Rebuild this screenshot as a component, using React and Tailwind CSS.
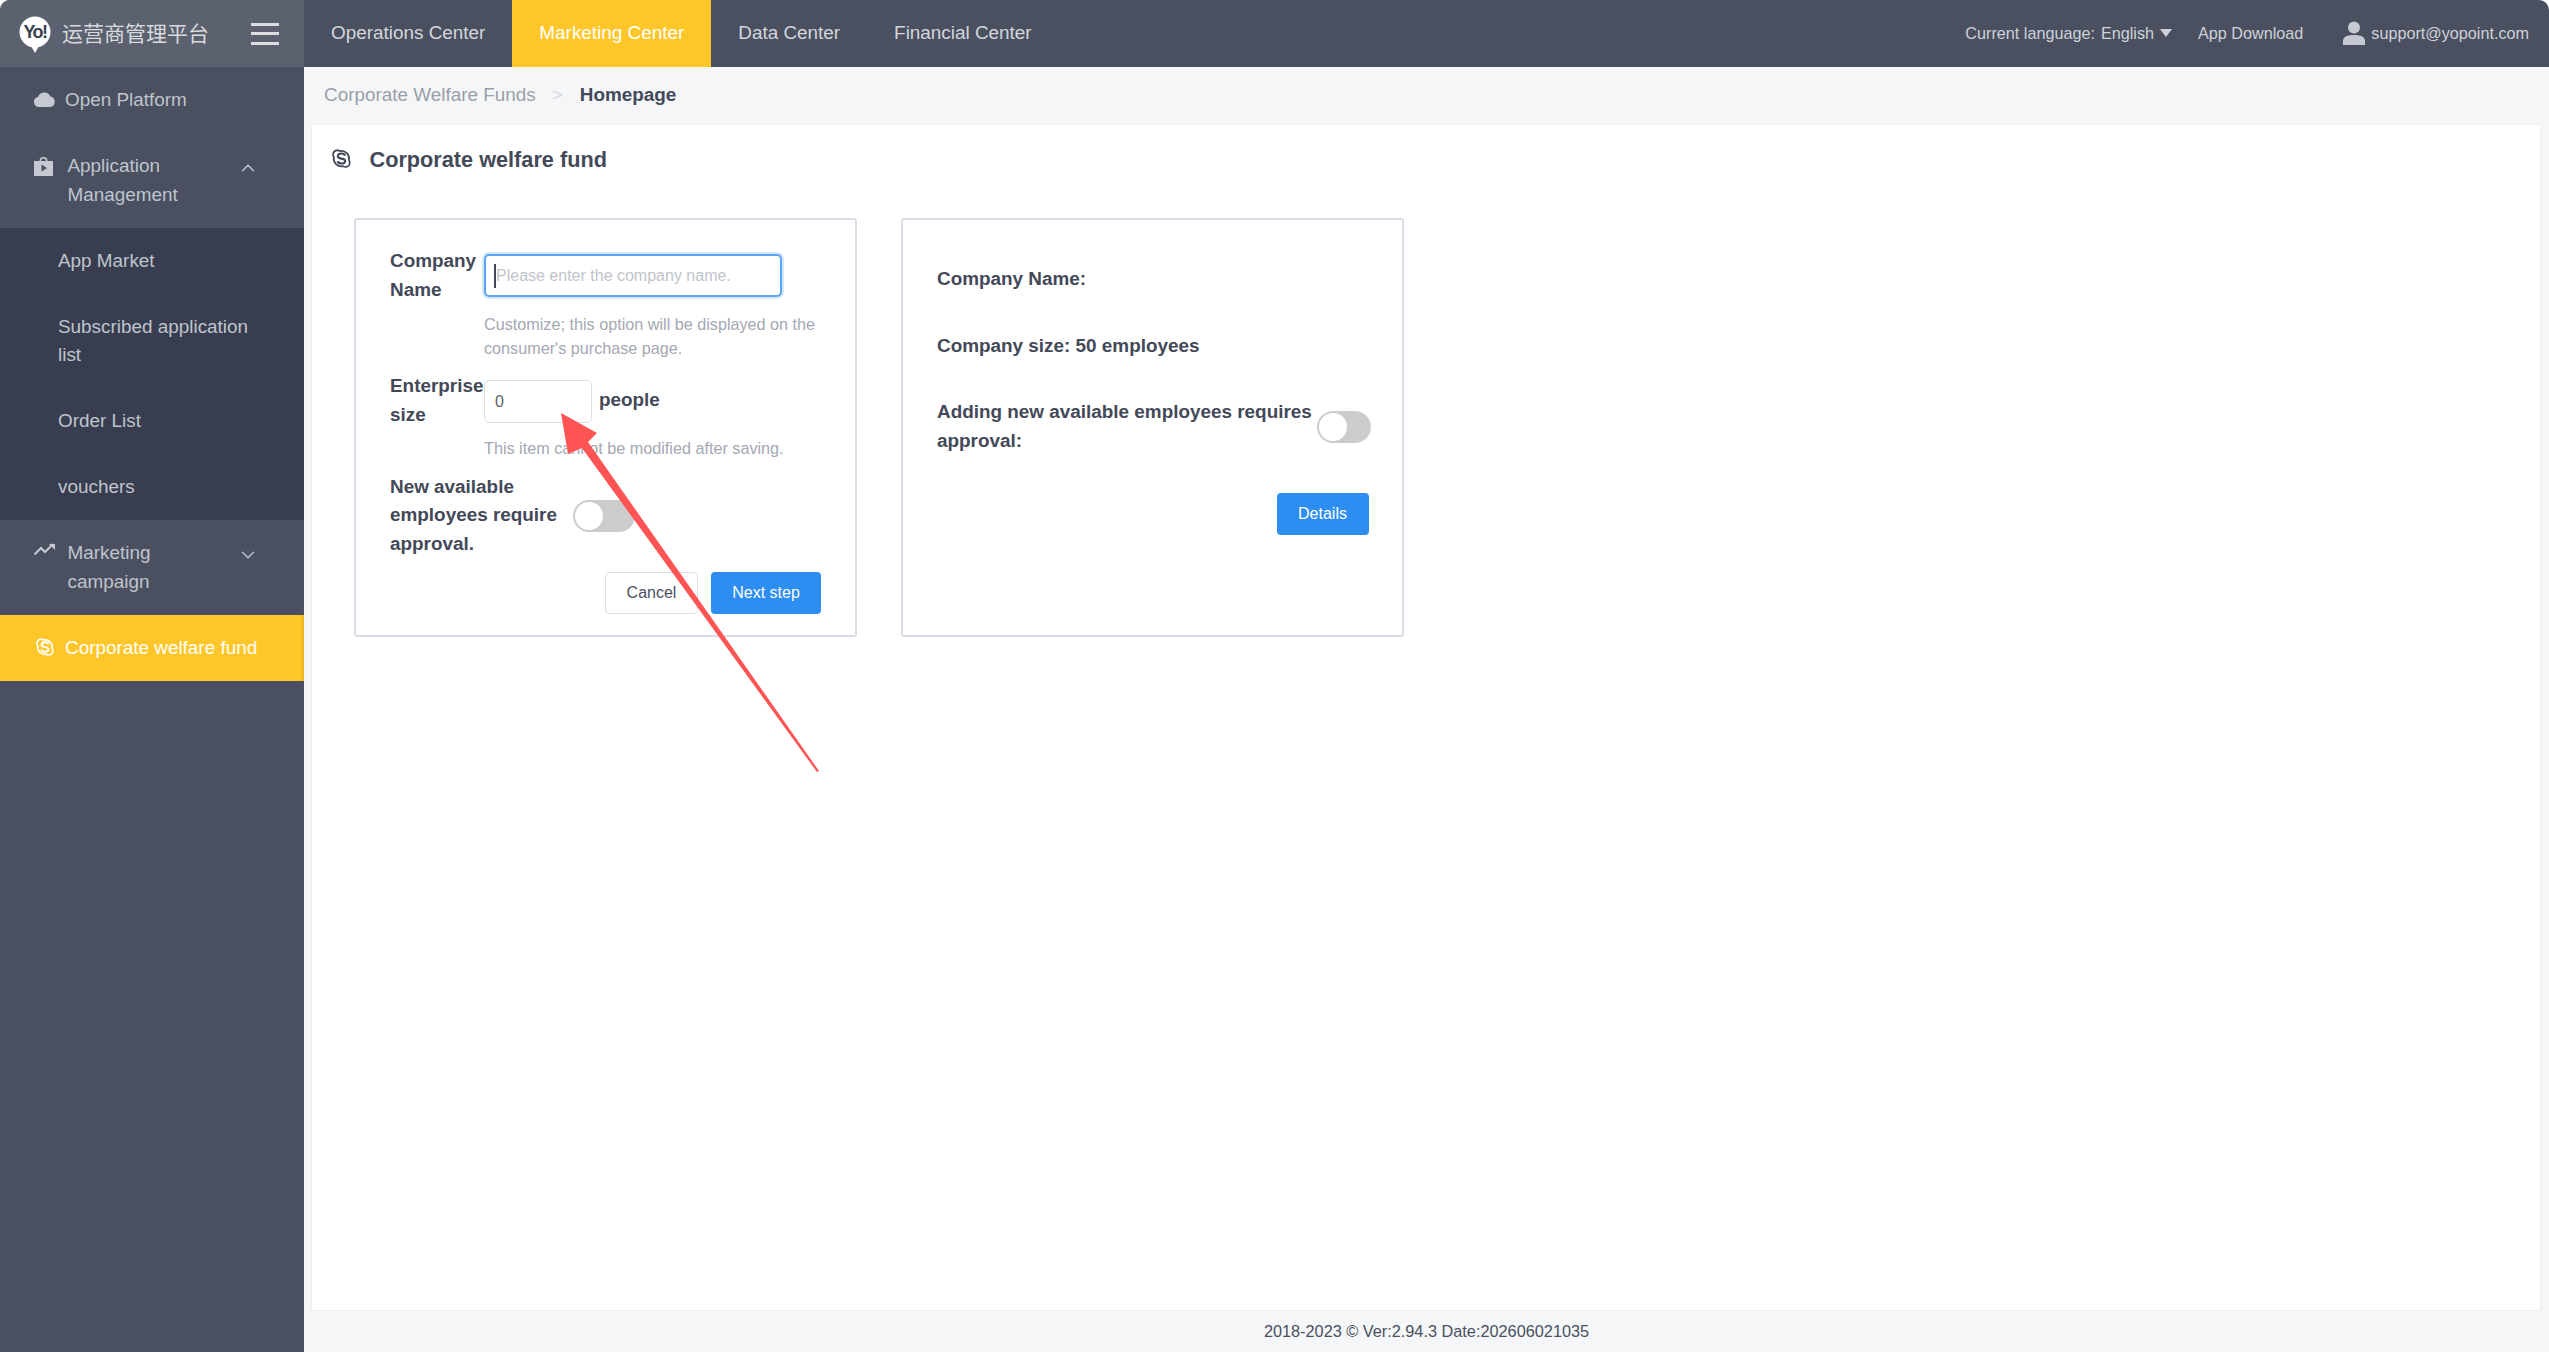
import React from "react";
import { ChevronUp, ChevronDown } from "lucide-react";

const font = "font-['Liberation_Sans','Noto_Sans_CJK_SC',sans-serif]";

function Cloud() {
  return (
    <svg width="21" height="16" viewBox="0 0 21 16" fill="#c5c9d2">
      <path d="M5 16a5 5 0 0 1-1-9.9A6.5 6.5 0 0 1 16.300 5.500 5.300 5.300 0 0 1 16 16z" />
    </svg>
  );
}

function Bag() {
  return (
    <svg width="19" height="20" viewBox="0 0 19 20">
      <path fill="#c5c9d2" fillRule="evenodd" d="M0 5h5.500a4 4 0 0 1 8 0H19v15H0zM7 5h5a2.500 2.500 0 0 0-5 0z" />
      <path fill="#4a5060" d="M7.500 8.500l5.500 3.500-5.500 3.500z" />
    </svg>
  );
}

function Trend() {
  return (
    <svg width="22" height="12" viewBox="0 0 22 12" fill="none" stroke="#c5c9d2" strokeWidth="2">
      <path d="M0.500 11.500L7 5l4 4 8-8" />
      <path d="M15 1h6v6z" fill="#c5c9d2" stroke="none" />
    </svg>
  );
}

function SkypeIcon({ color, size }) {
  return (
    <svg width={size} height={size} viewBox="0 0 18 18" fill="none">
      <path d="M5 1.200c1.200 0 2 .6 2.800.7a7.300 7.300 0 0 1 8.300 8.300c.1.800.7 1.600.7 2.800a4 4 0 0 1-4 4c-1.200 0-2-.6-2.800-.7a7.300 7.300 0 0 1-8.300-8.300C1.600 7.200 1 6.400 1 5.200a4 4 0 0 1 4-4z" stroke={color} strokeWidth="1.700" />
      <path d="M12.500 6.300C12 4.900 10.600 4.200 9 4.200c-2 0-3.500 1-3.500 2.600 0 3.200 7 1.500 7 4.500 0 1.500-1.500 2.500-3.600 2.500-1.700 0-3.100-.7-3.700-2.200" stroke={color} strokeWidth="2" />
    </svg>
  );
}

function Toggle({ wide }) {
  return (
    <span className={`flex h-[32px] shrink-0 items-center rounded-full border-[2px] border-[#cccccc] bg-[#cccccc] ${wide ? "w-[62px]" : "w-[54px]"}`}>
      <span className="h-[28px] w-[28px] rounded-full bg-white" />
    </span>
  );
}

function NavGroup({ icon, title, open }) {
  return (
    <div className="flex h-[95px] items-start pl-[34px] pt-[19px]">
      <span className="mt-[4px] flex w-[33.500px] shrink-0">{icon}</span>
      <span className="w-[150px] text-[18.900px] leading-[28.500px] text-[#bfc4cd]">{title}</span>
      {open ? (
        <ChevronUp size={22} strokeWidth={1.500} className="ml-[19px] mt-[5px] text-[#bfc4cd]" />
      ) : (
        <ChevronDown size={22} strokeWidth={1.500} className="ml-[19px] mt-[5px] text-[#bfc4cd]" />
      )}
    </div>
  );
}

function SubItem({ children }) {
  return (
    <div className="py-[18.700px] pl-[58px] pr-[40px] text-[18.900px] leading-[28.500px] text-[#bfc4cd]">{children}</div>
  );
}

function Sidebar() {
  return (
    <aside className="flex w-[304px] shrink-0 flex-col bg-[#4a5060]">
      <div className="flex h-[67px] items-center bg-[#5b616f] pl-[19px]">
        <svg width="32" height="38" viewBox="0 0 32 38" className="mt-[2px] shrink-0">
          <circle cx="16" cy="16" r="15.500" fill="#ffffff" />
          <path d="M12 30l4 7 4-7z" fill="#ffffff" />
          <text x="16" y="22" textAnchor="middle" fontSize="18" fontWeight="700" fontFamily="Liberation Sans" fill="#3c4150" letterSpacing="-1.500">Yo!</text>
        </svg>
        <span className="ml-[11px] w-[189px] text-[21px] text-[#d8dade]">运营商管理平台</span>
        <span className="flex w-[28px] flex-col gap-[6.500px]">
          <span className="h-[3px] bg-[#dcdee2]" />
          <span className="h-[3px] bg-[#dcdee2]" />
          <span className="h-[3px] bg-[#dcdee2]" />
        </span>
      </div>
      <div className="flex h-[66px] items-center pl-[34px]">
        <span className="-mt-[3px] flex w-[31px]"><Cloud /></span>
        <span className="text-[18.900px] text-[#bfc4cd]">Open Platform</span>
      </div>
      <NavGroup icon={<Bag />} title="Application Management" open />
      <div className="bg-[#383e4f]">
        <SubItem>App Market</SubItem>
        <SubItem>Subscribed application list</SubItem>
        <SubItem>Order List</SubItem>
        <SubItem>vouchers</SubItem>
      </div>
      <NavGroup icon={<Trend />} title="Marketing campaign" />
      <div className="flex h-[66px] items-center border-r-[3px] border-[#f0b922] bg-[#ffc629] pl-[36px]">
        <span className="-mt-[3px] flex w-[29px]"><SkypeIcon color="#ffffff" size={18} /></span>
        <span className="text-[18.900px] text-white">Corporate welfare fund</span>
      </div>
    </aside>
  );
}

function Tab({ children, active }) {
  return (
    <div className={`flex h-[67px] items-center px-[27px] text-[18.900px] ${active ? "bg-[#ffc629] text-white" : "text-[#d3d6dc]"}`}>
      {children}
    </div>
  );
}

function Header() {
  return (
    <header className="flex h-[67px] shrink-0 items-center bg-[#4a5060]">
      <Tab>Operations Center</Tab>
      <Tab active>Marketing Center</Tab>
      <Tab>Data Center</Tab>
      <Tab>Financial Center</Tab>
      <div className="ml-auto flex items-center pr-[20px] text-[16.200px] text-[#cfd2d8]">
        <span>Current language:</span>
        <span className="ml-[6px]">English</span>
        <span className="ml-[6px] h-0 w-0 border-x-[6.500px] border-t-[8px] border-x-transparent border-t-[#cfd2d8]" />
        <span className="ml-[26px]">App Download</span>
        <svg width="22" height="24" viewBox="0 0 22 24" fill="#c5c9d2" className="ml-[40px]">
          <circle cx="11" cy="6.500" r="6" />
          <path d="M0 24v-4c0-4 4-6 11-6s11 2 11 6v4z" />
        </svg>
        <span className="ml-[6px]">support@yopoint.com</span>
      </div>
    </header>
  );
}

function Help({ children }) {
  return <p className="text-[16.200px] leading-[24px] text-[#a3a8b3]">{children}</p>;
}

function SetupCard() {
  return (
    <div className="h-[419px] w-[503px] rounded-[3px] border-2 border-[#d8dce6] px-[34px] pt-[27px] text-[18.900px] font-bold leading-[28.500px] text-[#434958]">
      <div className="flex">
        <div className="w-[94px] shrink-0">Company Name</div>
        <div className="flex-1">
          <div className="mt-[7px] flex h-[43px] w-[298px] items-center rounded-[5px] border-2 border-[#5aa5f5] pl-[8px] pt-[1px] text-[16px] font-normal shadow-[0_0_0_2px_#d5e8fc]">
            <span className="h-[24px] w-[2px] bg-[#434958]" />
            <span className="text-[#c0c4cc]">Please enter the company name.</span>
          </div>
          <div className="mt-[14.500px] font-normal"><Help>Customize; this option will be displayed on the consumer's purchase page.</Help></div>
        </div>
      </div>
      <div className="mt-[12.500px] flex">
        <div className="w-[94px] shrink-0">Enterprise size</div>
        <div className="flex-1">
          <div className="mt-[8px] flex items-center">
            <div className="flex h-[43px] w-[108px] items-center rounded-[5px] border-[1.500px] border-[#dcdfe6] pl-[10px] pt-[2px] text-[16px] font-normal text-[#606266]">0</div>
            <span className="-mt-[3px] ml-[7px]">people</span>
          </div>
          <div className="mt-[12.500px] font-normal"><Help>This item cannot be modified after saving.</Help></div>
        </div>
      </div>
      <div className="mt-[13px] flex items-center">
        <div className="w-[183px] shrink-0">New available employees require approval.</div>
        <span className="mt-[1px] flex"><Toggle wide /></span>
      </div>
      <div className="mt-[14px] flex justify-end gap-[13px] text-[16px] font-normal">
        <button className="h-[42px] w-[93px] rounded-[4px] border border-[#dcdfe6] text-[#4a5060]">Cancel</button>
        <button className="h-[42px] w-[110px] rounded-[4px] bg-[#2e8df0] text-white">Next step</button>
      </div>
    </div>
  );
}

function SummaryCard() {
  return (
    <div className="ml-[44px] h-[419px] w-[503px] rounded-[3px] border-2 border-[#d8dce6] pl-[34px] pr-[33.500px] pt-[45px] text-[18.900px] font-bold leading-[28.500px] text-[#434958]">
      <div>Company Name:</div>
      <div className="mt-[38px]">Company size: 50 employees</div>
      <div className="mt-[38px] flex items-center">
        <div className="w-[380px] shrink-0">Adding new available employees requires approval:</div>
        <Toggle />
      </div>
      <div className="mt-[38px] flex justify-end">
        <button className="h-[42px] w-[92px] rounded-[4px] bg-[#2e8df0] text-[16px] font-normal text-white">Details</button>
      </div>
    </div>
  );
}

export default function App() {
  return (
    <div className={`${font} relative flex h-screen w-screen overflow-hidden rounded-t-[10px] bg-[#f4f6f8]`}>
      <Sidebar />
      <div className="flex min-w-0 flex-1 flex-col">
        <Header />
        <div className="flex h-[57px] shrink-0 items-center pb-[1px] pl-[20px] text-[18.900px]">
          <span className="text-[#9a9fa9]">Corporate Welfare Funds</span>
          <span className="ml-[16px] text-[#d5d8de]">&gt;</span>
          <span className="ml-[17px] font-bold text-[#434958]">Homepage</span>
        </div>
        <main className="relative ml-[7px] mr-[8px] flex-1 rounded-[3px] border border-[#eceef1] bg-white pl-[42px] pt-[93px]">
          <div className="absolute left-[20px] top-[19px] flex items-center">
            <span className="-mt-[3px] flex"><SkypeIcon color="#434958" size={19} /></span>
            <h1 className="ml-[18.500px] text-[21.700px] font-bold text-[#434958]">Corporate welfare fund</h1>
          </div>
          <div className="flex">
            <SetupCard />
            <SummaryCard />
          </div>
        </main>
        <footer className="flex h-[41px] shrink-0 items-center justify-center text-[16.300px] text-[#4a5060]">
          2018-2023 © Ver:2.94.3 Date:202606021035
        </footer>
      </div>
      <svg className="pointer-events-none absolute left-0 top-0" width="2549" height="1352" fill="#ff5454">
        <path d="M561 413L597 433 588 442 819 771 817 772 582 448 568 454z" />
      </svg>
    </div>
  );
}
